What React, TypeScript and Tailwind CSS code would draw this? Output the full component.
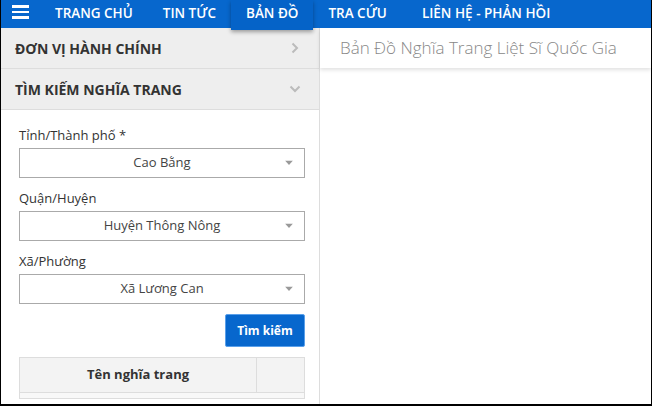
import React from "react";

const Caret = () => (
  <svg width="8" height="5" viewBox="0 0 8 5" className="absolute right-[11px] top-1/2 -translate-y-1/2">
    <path d="M0 0 L8 0 L4 4.5 Z" fill="#999" />
  </svg>
);

const Select = ({ value }: { value: string }) => (
  <div className="relative h-[30px] border border-[#aaaaaa] bg-white flex items-center justify-center text-[13px] text-[#444]">
    <span>{value}</span>
    <Caret />
  </div>
);

export default function App() {
  return (
    <div
      className="w-[652px] h-[406px] overflow-hidden bg-white border-l border-r border-b-2 border-black flex flex-col"
      style={{ fontFamily: '"Open Sans", "Noto Sans", sans-serif' }}
    >
      <nav className="h-[28px] bg-[#0767cd] flex items-stretch text-white text-[13.5px] font-semibold shrink-0 relative z-10">
        <div className="w-[54px] flex items-start pl-[11px] pt-[5px]">
          <div className="flex flex-col gap-[3px]">
            <span className="block w-[17px] h-[2.5px] bg-white" />
            <span className="block w-[17px] h-[2.5px] bg-white" />
            <span className="block w-[17px] h-[2.5px] bg-white" />
          </div>
        </div>
        <div className="flex items-center h-[28px] pb-[2px]">TRANG CHỦ</div>
        <div className="flex items-center h-[28px] pb-[2px] ml-[30px]">TIN TỨC</div>
        <div className="flex items-center h-[30px] pb-[4px] ml-[15px] px-[15px] bg-[#0563c8] shadow-[0_2px_4px_rgba(0,0,0,0.35)]">BẢN ĐỒ</div>
        <div className="flex items-center h-[28px] pb-[2px] ml-[15px]">TRA CỨU</div>
        <div className="flex items-center h-[28px] pb-[2px] ml-[35px]">LIÊN HỆ - PHẢN HỒI</div>
      </nav>
      <div className="flex flex-1 min-h-0">
        <aside className="w-[319px] border-r border-[#dddddd] flex flex-col shrink-0">
          <div className="h-[41px] bg-[#eeeeee] border-b border-[#dddddd] flex items-center justify-between pl-[14px] pr-[20px] text-[14px] font-bold text-[#333]">
            <span>ĐƠN VỊ HÀNH CHÍNH</span>
            <svg width="8" height="12" viewBox="0 0 8 12"><path d="M1.5 1.5 L6 6 L1.5 10.5" stroke="#bbb" strokeWidth="2" fill="none" /></svg>
          </div>
          <div className="h-[41px] bg-[#eeeeee] border-b border-[#dddddd] flex items-center justify-between pl-[14px] pr-[18px] text-[14px] font-bold text-[#333]">
            <span>TÌM KIẾM NGHĨA TRANG</span>
            <svg width="12" height="8" viewBox="0 0 12 8"><path d="M1.5 1.5 L6 6 L10.5 1.5" stroke="#bbb" strokeWidth="2" fill="none" /></svg>
          </div>
          <div className="flex flex-col px-[18px] pt-[16px] pr-[14px] text-[13px] text-[#333]">
            <div className="leading-[18px] mb-[4px]">Tỉnh/Thành phố *</div>
            <Select value="Cao Bằng" />
            <div className="leading-[18px] mt-[11px] mb-[4px]">Quận/Huyện</div>
            <Select value="Huyện Thông Nông" />
            <div className="leading-[18px] mt-[11px] mb-[4px]">Xã/Phường</div>
            <Select value="Xã Lương Can" />
            <div className="flex justify-end mt-[10px]">
              <button className="w-[80px] h-[33px] bg-[#0767cd] border border-[#5aa0ea] rounded-[2px] text-white text-[12px] font-bold">
                Tìm kiếm
              </button>
            </div>
            <div className="mt-[10px] border border-[#dddddd]">
              <div className="flex h-[35px] bg-[#f3f3f3] border-b border-[#dddddd]">
                <div className="flex-1 flex items-center justify-center font-bold text-[13px] text-[#333] border-r border-[#dddddd]">
                  Tên nghĩa trang
                </div>
                <div className="w-[47px]" />
              </div>
              <div className="h-[5px] bg-[#f8f8f8]" />
            </div>
          </div>
        </aside>
        <main className="flex-1 flex flex-col">
          <div className="h-[40px] bg-white shadow-[0_2px_4px_rgba(0,0,0,0.12)] flex items-center pl-[20px] text-[17px] text-[#888] font-light">
            Bản Đồ Nghĩa Trang Liệt Sĩ Quốc Gia
          </div>
        </main>
      </div>
    </div>
  );
}
